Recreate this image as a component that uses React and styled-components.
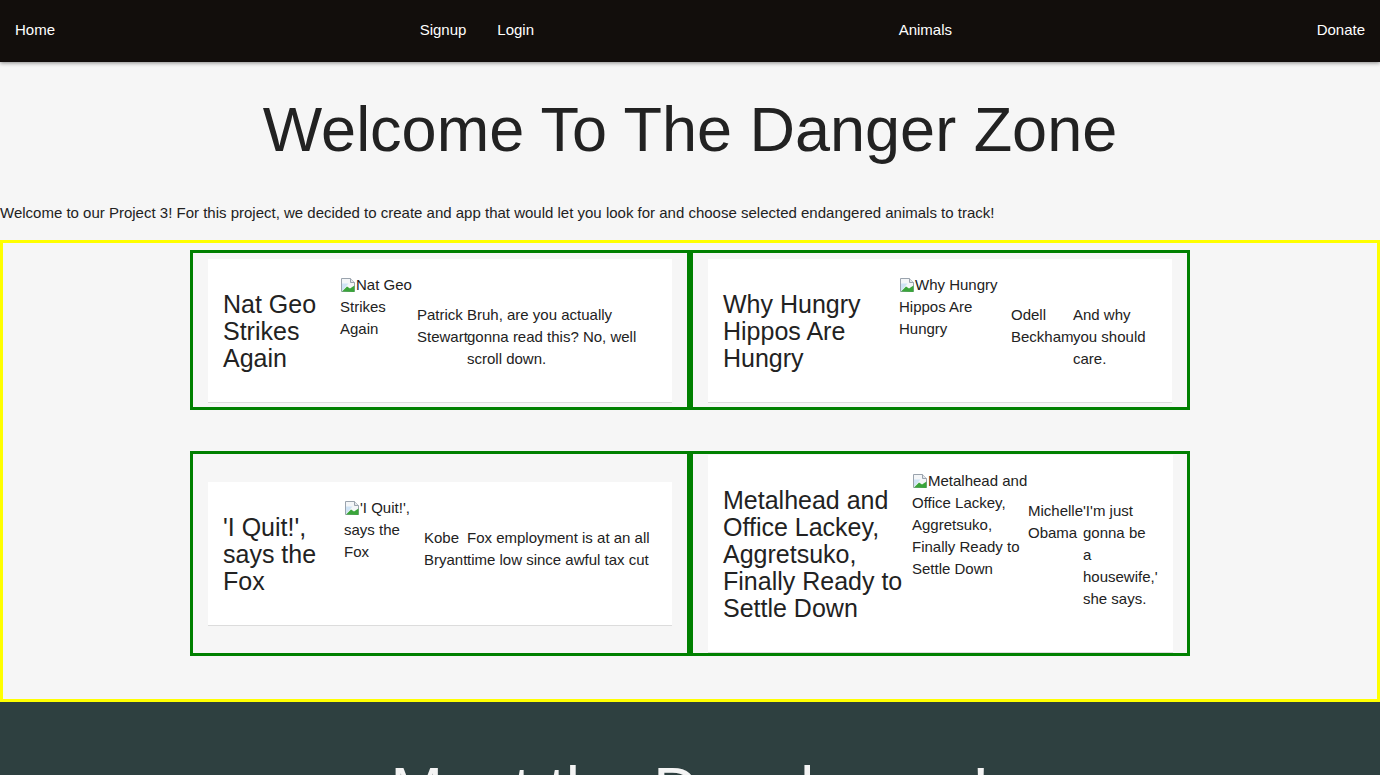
import React from 'react'
import styled, { createGlobalStyle } from 'styled-components'

const GlobalStyle = createGlobalStyle`
  body {
    margin: 0;
    background: #f6f6f6;
    color: #222;
    font-family: "Liberation Sans", Arial, Helvetica, sans-serif;
  }
`
const Nav = styled.nav`
  position: relative;
  z-index: 1;
  box-sizing: border-box;
  height: 62px;
  padding: 0 15px 4px;
  display: flex;
  justify-content: space-between;
  align-items: center;
  background: #120e0c;
  box-shadow: 0 1px 4px rgba(0, 0, 0, 0.45);
`
const NavGroup = styled.div`
  display: flex;
  gap: 31px;
`
const NavLink = styled.a`
  color: #fff;
  font-size: 15px;
  text-decoration: none;
`
const Hero = styled.h1`
  margin: 31px 0 0;
  text-align: center;
  font-size: 63px;
  font-weight: 400;
  color: #222;
`
const Intro = styled.p`
  margin: 39px 0 19px;
  font-size: 15px;
`
const Board = styled.section`
  border: 3px solid #ffff00;
  padding: 7px 0 2px;
`
const Row = styled.div`
  display: flex;
  justify-content: center;
  margin-bottom: 41px;
`
const Cell = styled.div`
  box-sizing: border-box;
  width: 500px;
  min-height: 160px;
  border: 3px solid #008000;
  padding: 1px 15px;
  display: flex;
  align-items: center;
`
const Card = styled.article`
  flex: 1;
  display: flex;
  padding: 15px;
  background: #fff;
  box-shadow: 0 1px 0 #dcdcdc;
`
const Title = styled.h3`
  flex: none;
  width: ${(p) => p.$w}px;
  align-self: center;
  margin: 17px 0 15px;
  font-size: 25px;
  line-height: 27px;
  font-weight: 400;
`
const Picture = styled.div`
  flex: none;
  width: ${(p) => p.$w}px;
  font-size: 15px;
  line-height: 22px;

  svg {
    vertical-align: -3px;
  }
`
const Byline = styled.div`
  flex: 1;
  display: flex;
  margin-top: 30px;
  font-size: 15px;
  line-height: 22px;
`
const Author = styled.div`
  flex: none;
  width: ${(p) => p.$w}px;
`
const Blurb = styled.div`
  flex: 1;
  min-width: 0;
`
const Team = styled.section`
  background: #2e4040;
  padding: 51px 0 40px;
`
const TeamHeading = styled.h1`
  margin: 0;
  text-align: center;
  color: #f4f4f4;
  font-size: 63px;
  font-weight: 400;
`

const BrokenImage = () => (
  <svg width='16' height='16' viewBox='0 0 16 16'>
    <path d='M1.5 1.5h9l4 4v9h-13z' fill='#f4f6f8' stroke='#9aa3ad' />
    <path d='M10.5 1.5v4h4' fill='#e3e7eb' stroke='#9aa3ad' />
    <path d='M2 14V6.5h6.5' fill='#cfe3f5' />
    <path d='M2 14.5l5-5 3 2 4.5-3v6.5z' fill='#3aa53a' />
  </svg>
)

const stories = [
  [
    { title: 'Nat Geo Strikes Again', author: 'Patrick Stewart', text: 'Bruh, are you actually gonna read this? No, well scroll down.', w: [117, 77, 50] },
    { title: 'Why Hungry Hippos Are Hungry', author: 'Odell Beckham', text: 'And why you should care.', w: [176, 112, 62] }
  ],
  [
    { title: "'I Quit!', says the Fox", author: 'Kobe Bryant', text: 'Fox employment is at an all time low since awful tax cut', w: [121, 80, 43] },
    { title: 'Metalhead and Office Lackey, Aggretsuko, Finally Ready to Settle Down', author: 'Michelle Obama', text: "'I'm just gonna be a housewife,' she says.", w: [189, 116, 55] }
  ]
]

function Story({ story }) {
  const [titleW, picW, authorW] = story.w
  return (
    <Cell>
      <Card>
        <Title $w={titleW}>{story.title}</Title>
        <Picture $w={picW}>
          <BrokenImage />
          {story.title}
        </Picture>
        <Byline>
          <Author $w={authorW}>{story.author}</Author>
          <Blurb>{story.text}</Blurb>
        </Byline>
      </Card>
    </Cell>
  )
}

export default function App() {
  return (
    <>
      <GlobalStyle />
      <Nav>
        <NavLink href='#'>Home</NavLink>
        <NavGroup>
          <NavLink href='#'>Signup</NavLink>
          <NavLink href='#'>Login</NavLink>
        </NavGroup>
        <NavLink href='#'>Animals</NavLink>
        <NavLink href='#'>Donate</NavLink>
      </Nav>
      <Hero>Welcome To The Danger Zone</Hero>
      <Intro>
        Welcome to our Project 3! For this project, we decided to create and app that would let you look for and choose selected endangered animals to track!
      </Intro>
      <Board>
        {stories.map((row, i) => (
          <Row key={i}>
            {row.map((s) => (
              <Story key={s.title} story={s} />
            ))}
          </Row>
        ))}
      </Board>
      <Team>
        <TeamHeading>Meet the Developers!</TeamHeading>
      </Team>
    </>
  )
}
